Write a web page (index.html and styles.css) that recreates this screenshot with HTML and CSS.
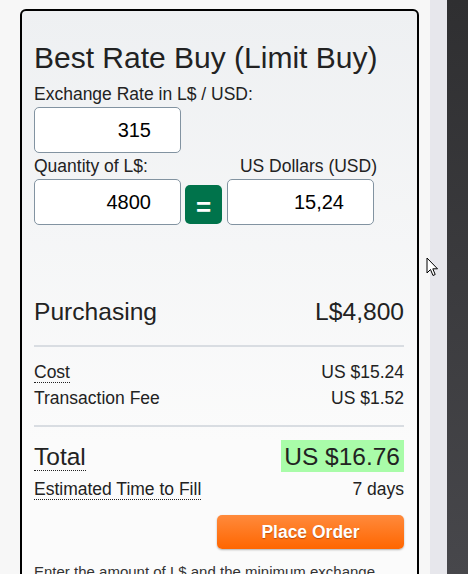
FILE: index.html
```html
<!DOCTYPE html>
<html>
<head>
<meta charset="utf-8">
<link rel="stylesheet" href="styles.css">
</head>
<body>
<div class="layout">
  <main class="main">
    <section class="card">
      <h1 class="title">Best Rate Buy (Limit Buy)</h1>
      <div class="label">Exchange Rate in L$ / USD:</div>
      <div class="field"><input class="num" type="text" value="315"></div>
      <div class="label-row">
        <span>Quantity of L$:</span>
        <span>US Dollars (USD)</span>
      </div>
      <div class="inputs-row">
        <input class="num" type="text" value="4800">
        <button class="eq">=</button>
        <input class="num" type="text" value="15,24">
      </div>
      <div class="purchasing"><span>Purchasing</span><span>L$4,800</span></div>
      <hr class="sep sep1">
      <div class="row"><span><span class="dotted">Cost</span></span><span>US $15.24</span></div>
      <div class="row"><span>Transaction Fee</span><span>US $1.52</span></div>
      <hr class="sep sep2">
      <div class="total"><span><span class="dotted">Total</span></span><span><span class="hl">US $16.76</span></span></div>
      <div class="row eta"><span><span class="dotted">Estimated Time to Fill</span></span><span>7 days</span></div>
      <div class="actions"><button class="order">Place Order</button></div>
      <p class="note">Enter the amount of L$ and the minimum exchange rate you are willing to accept for your order.</p>
    </section>
  </main>
  <div class="strip"></div>
  <div class="dark"></div>
</div>
<svg class="cursor" width="13" height="21" viewBox="0 0 13 21"><path d="M1 1 L1 16 L4.5 12.5 L7 18.5 L9.2 17.5 L6.8 11.8 L11.5 11.8 Z" fill="#fff" stroke="#000" stroke-width="1" stroke-linejoin="round"/></svg>
</body>
</html>
```
FILE: styles.css
```css
html, body {
  margin: 0;
  padding: 0;
  height: 574px;
  overflow: hidden;
}
body {
  font-family: "Liberation Sans", Arial, sans-serif;
  color: #222;
  position: relative;
}
.layout {
  display: flex;
  height: 574px;
}
.main {
  width: 430px;
  background: #f7f7f7;
  padding: 9px 0 0 20px;
  box-sizing: border-box;
}
.strip {
  width: 17px;
  background: #e7e7ec;
}
.dark {
  width: 21px;
  background: linear-gradient(to bottom, #2f2f31, #47474b);
}
.card {
  width: 399px;
  height: 620px;
  box-sizing: border-box;
  border: 2px solid #000;
  border-radius: 6px;
  background: linear-gradient(to bottom, #eef0f2, #fbfbfb 70%);
  padding: 29px 13px 0 12px;
}
.title {
  margin: 0;
  font-size: 30px;
  line-height: 36px;
  font-weight: normal;
}
.label {
  margin-top: 8px;
  font-size: 17.5px;
  line-height: 20px;
}
.field {
  margin-top: 3px;
  display: flex;
}
.num {
  width: 147px;
  height: 46px;
  box-sizing: border-box;
  border: 1px solid #8293a1;
  border-radius: 5px;
  background: #fff;
  font-family: "Liberation Sans", Arial, sans-serif;
  font-size: 20px;
  color: #000;
  text-align: right;
  padding: 0 29px 0 6px;
  margin: 0;
}
.label-row {
  margin-top: 3px;
  width: 343px;
  display: flex;
  justify-content: space-between;
  font-size: 17.5px;
  line-height: 20px;
}
.inputs-row {
  margin-top: 3px;
  display: flex;
  align-items: flex-end;
}
.eq {
  width: 37px;
  height: 39px;
  margin: 0 5px 1px 4px;
  border: none;
  border-radius: 5px;
  background: #00734b;
  color: #fff;
  font-family: "Liberation Sans", Arial, sans-serif;
  font-size: 26px;
  font-weight: bold;
  line-height: 39px;
  padding: 3px 0 0;
}
.purchasing {
  margin-top: 72px;
  display: flex;
  justify-content: space-between;
  font-size: 24.6px;
  line-height: 30px;
}
.sep {
  border: none;
  height: 2px;
  background: #d9dde2;
  margin: 0;
}
.sep1 { margin-top: 18px; }
.sep2 { margin-top: 14px; }
.row {
  display: flex;
  justify-content: space-between;
  font-size: 17.5px;
  line-height: 26px;
}
.sep1 + .row { margin-top: 12px; }
.dotted {
  border-bottom: 1px dotted #222;
}
.total {
  margin-top: 12px;
  display: flex;
  justify-content: space-between;
  font-size: 24.5px;
  line-height: 36px;
}
.hl {
  background: #a9fca9;
  padding: 3px 4px 2px 3px;
}
.eta {
  margin-top: 1px;
}
.actions {
  margin-top: 13px;
  display: flex;
  justify-content: flex-end;
}
.order {
  width: 187px;
  height: 34px;
  border: none;
  border-radius: 5px;
  background: linear-gradient(to bottom, #ff8a3c, #ff6600);
  box-shadow: 0 1px 2px rgba(0, 0, 0, 0.3);
  color: #fff;
  font-family: "Liberation Sans", Arial, sans-serif;
  font-size: 17.5px;
  font-weight: bold;
  text-shadow: 0 1px 1px rgba(120, 40, 0, 0.5);
  padding: 0;
}
.note {
  margin: 13px 0 0;
  font-size: 15px;
  line-height: 20px;
  color: #333;
}
.cursor {
  position: absolute;
  left: 426px;
  top: 257px;
}
```
